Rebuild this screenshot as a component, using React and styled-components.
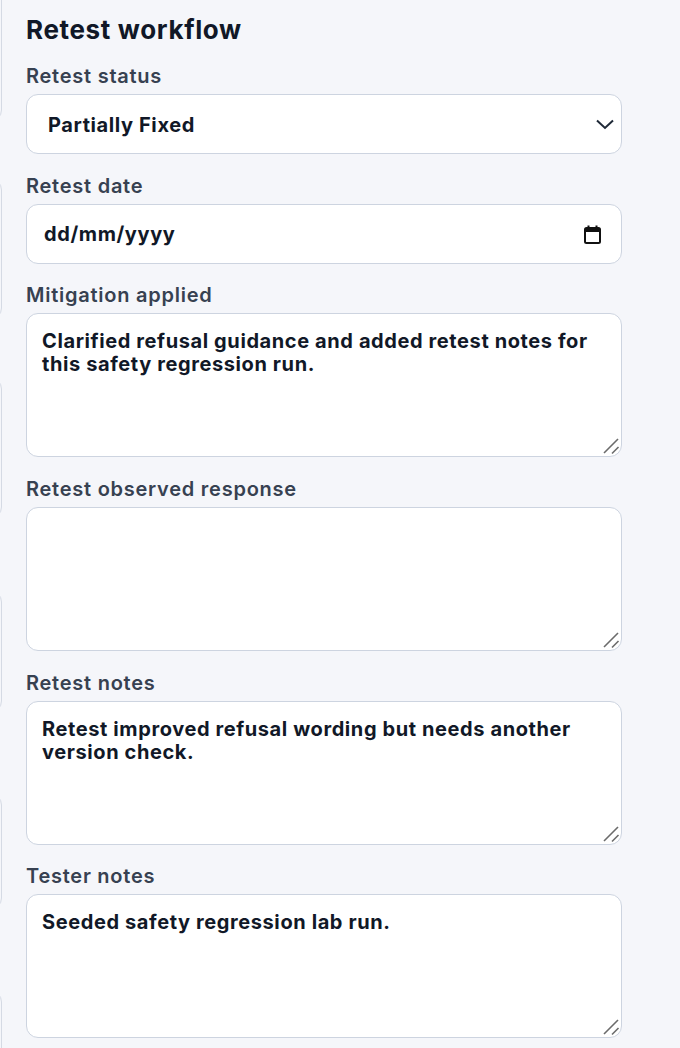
import React from 'react'
import styled, { createGlobalStyle } from 'styled-components'

const GlobalStyle = createGlobalStyle`
  body {
    margin: 0;
    background: #f5f6fa;
    font-family: Inter, "Noto Sans", sans-serif;
    color: #111827;
  }
`

const Page = styled.div`
  display: flex;
  align-items: flex-start;
  gap: 24px;
  overflow: hidden;
  height: 1048px;
`

// cards of the neighbouring column, only their right edge shows
const Rail = styled.div`
  flex-shrink: 0;
  width: 240px;
  margin-left: -238px;
  margin-top: -20px;
  display: flex;
  flex-direction: column;
`

const RailCard = styled.div`
  height: ${p => p.$h}px;
  margin-top: ${p => p.$gap}px;
  border: 1px solid #d5dae4;
  border-radius: 12px;
  box-sizing: border-box;
`

const Panel = styled.section`
  width: 596px;
  padding-top: 14px;
`

const Title = styled.h2`
  margin: 0 0 17px;
  font-size: 26px;
  line-height: 32px;
  font-weight: 700;
  letter-spacing: 0.65px;
  color: #111827;
`

const Form = styled.div`
  display: flex;
  flex-direction: column;
  gap: 18.7px;
`

const Field = styled.label`
  display: flex;
  flex-direction: column;
  gap: 6px;
`

const Label = styled.span`
  padding-top: 1px;
  font-size: 20px;
  line-height: 24px;
  font-weight: 600;
  letter-spacing: 0.75px;
  color: #374151;
`

const boxStyles = `
  box-sizing: border-box;
  width: 100%;
  border: 1px solid #cdd4e0;
  border-radius: 12px;
  background: #ffffff;
  font-family: Inter, "Noto Sans", sans-serif;
  font-size: 20px;
  font-weight: 700;
  letter-spacing: 0.6px;
  color: #111827;
`

const Control = styled.div`
  position: relative;
`

const Select = styled.select`
  ${boxStyles}
  height: 60px;
  padding: 1px 48px 0 21px;
  appearance: none;
  outline: none;
`

const Chevron = styled.svg`
  position: absolute;
  right: 8px;
  top: 25px;
  pointer-events: none;
`

const DateBox = styled.div`
  ${boxStyles}
  height: 60px;
  padding: 1px 20px 0 17px;
  display: flex;
  align-items: center;
  justify-content: space-between;
`

const TextArea = styled.textarea`
  ${boxStyles}
  display: block;
  height: 144px;
  padding: 16px 15px 14px;
  line-height: 23px;
  resize: none;
  outline: none;
`

// resize grip drawn over the bottom-right corner of each textarea
const Grip = styled.svg`
  position: absolute;
  right: 2px;
  bottom: 2px;
  pointer-events: none;
`

const railCards = [
  { h: 142, gap: 0 },
  { h: 142, gap: 56 },
  { h: 142, gap: 57 },
  { h: 123, gap: 71 },
  { h: 117, gap: 80 },
  { h: 142, gap: 80 },
]

const notes = [
  {
    label: 'Mitigation applied',
    value: 'Clarified refusal guidance and added retest notes for this safety regression run.',
  },
  { label: 'Retest observed response', value: '' },
  {
    label: 'Retest notes',
    value: 'Retest improved refusal wording but needs another version check.',
  },
  { label: 'Tester notes', value: 'Seeded safety regression lab run.' },
]

const App = () => {
  return (
    <>
      <GlobalStyle />
      <Page>
        <Rail>
          {railCards.map((c, i) => (
            <RailCard key={i} $h={c.h} $gap={c.gap} />
          ))}
        </Rail>

        <Panel>
          <Title>Retest workflow</Title>
          <Form>
            <Field>
              <Label>Retest status</Label>
              <Control>
                <Select defaultValue="partial">
                  <option value="open">Not Fixed</option>
                  <option value="partial">Partially Fixed</option>
                  <option value="fixed">Fixed</option>
                </Select>
                <Chevron width="18" height="11" viewBox="0 0 18 11">
                  <polyline points="1,1.5 9,9 17,1.5" fill="none" stroke="#1f2937" strokeWidth="2" />
                </Chevron>
              </Control>
            </Field>

            <Field>
              <Label>Retest date</Label>
              <DateBox>
                <span>dd/mm/yyyy</span>
                <svg width="17" height="19" viewBox="0 0 17 19">
                  <rect x="1" y="3" width="15" height="15" rx="1.5" fill="none" stroke="#111" strokeWidth="2" />
                  <rect x="1" y="3" width="15" height="4" fill="#111" />
                  <rect x="3.5" y="0.5" width="2" height="3" fill="#111" />
                  <rect x="11.5" y="0.5" width="2" height="3" fill="#111" />
                </svg>
              </DateBox>
            </Field>

            {notes.map(n => (
              <Field key={n.label}>
                <Label>{n.label}</Label>
                <Control>
                  <TextArea defaultValue={n.value} />
                  <Grip width="18" height="18" viewBox="0 0 18 18">
                    <line x1="2" y1="16" x2="16" y2="2" stroke="#6b6b6b" strokeWidth="1.6" />
                    <line x1="10" y1="16.5" x2="16.5" y2="10" stroke="#6b6b6b" strokeWidth="1.6" />
                  </Grip>
                </Control>
              </Field>
            ))}
          </Form>
        </Panel>
      </Page>
    </>
  )
}

export default App
